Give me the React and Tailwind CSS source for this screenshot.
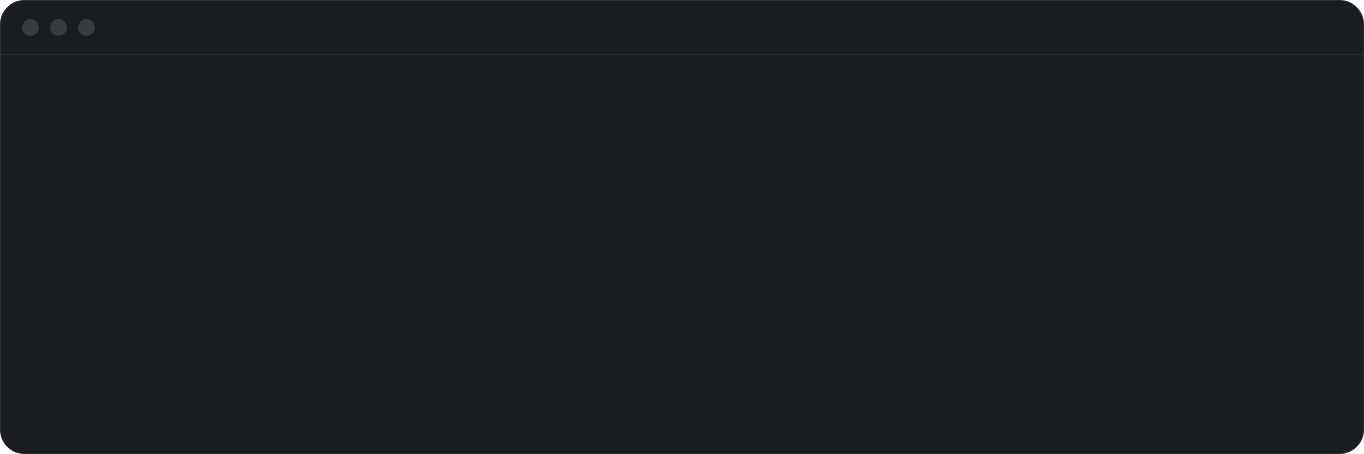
export default function App() {
  return (
    <div className="w-[1364px] h-[454px] bg-white">
      <div className="w-full h-full flex flex-col rounded-[24px] border border-[#2b2e33] bg-[#191c20] overflow-hidden">
        <div className="h-[54px] flex items-center gap-[11px] pl-[21px] border-b border-[#2a2e33]">
          <span className="w-[17px] h-[17px] rounded-full bg-[#373a3e]" />
          <span className="w-[17px] h-[17px] rounded-full bg-[#373a3e]" />
          <span className="w-[17px] h-[17px] rounded-full bg-[#373a3e]" />
        </div>
        <div className="flex-1" />
      </div>
    </div>
  );
}
